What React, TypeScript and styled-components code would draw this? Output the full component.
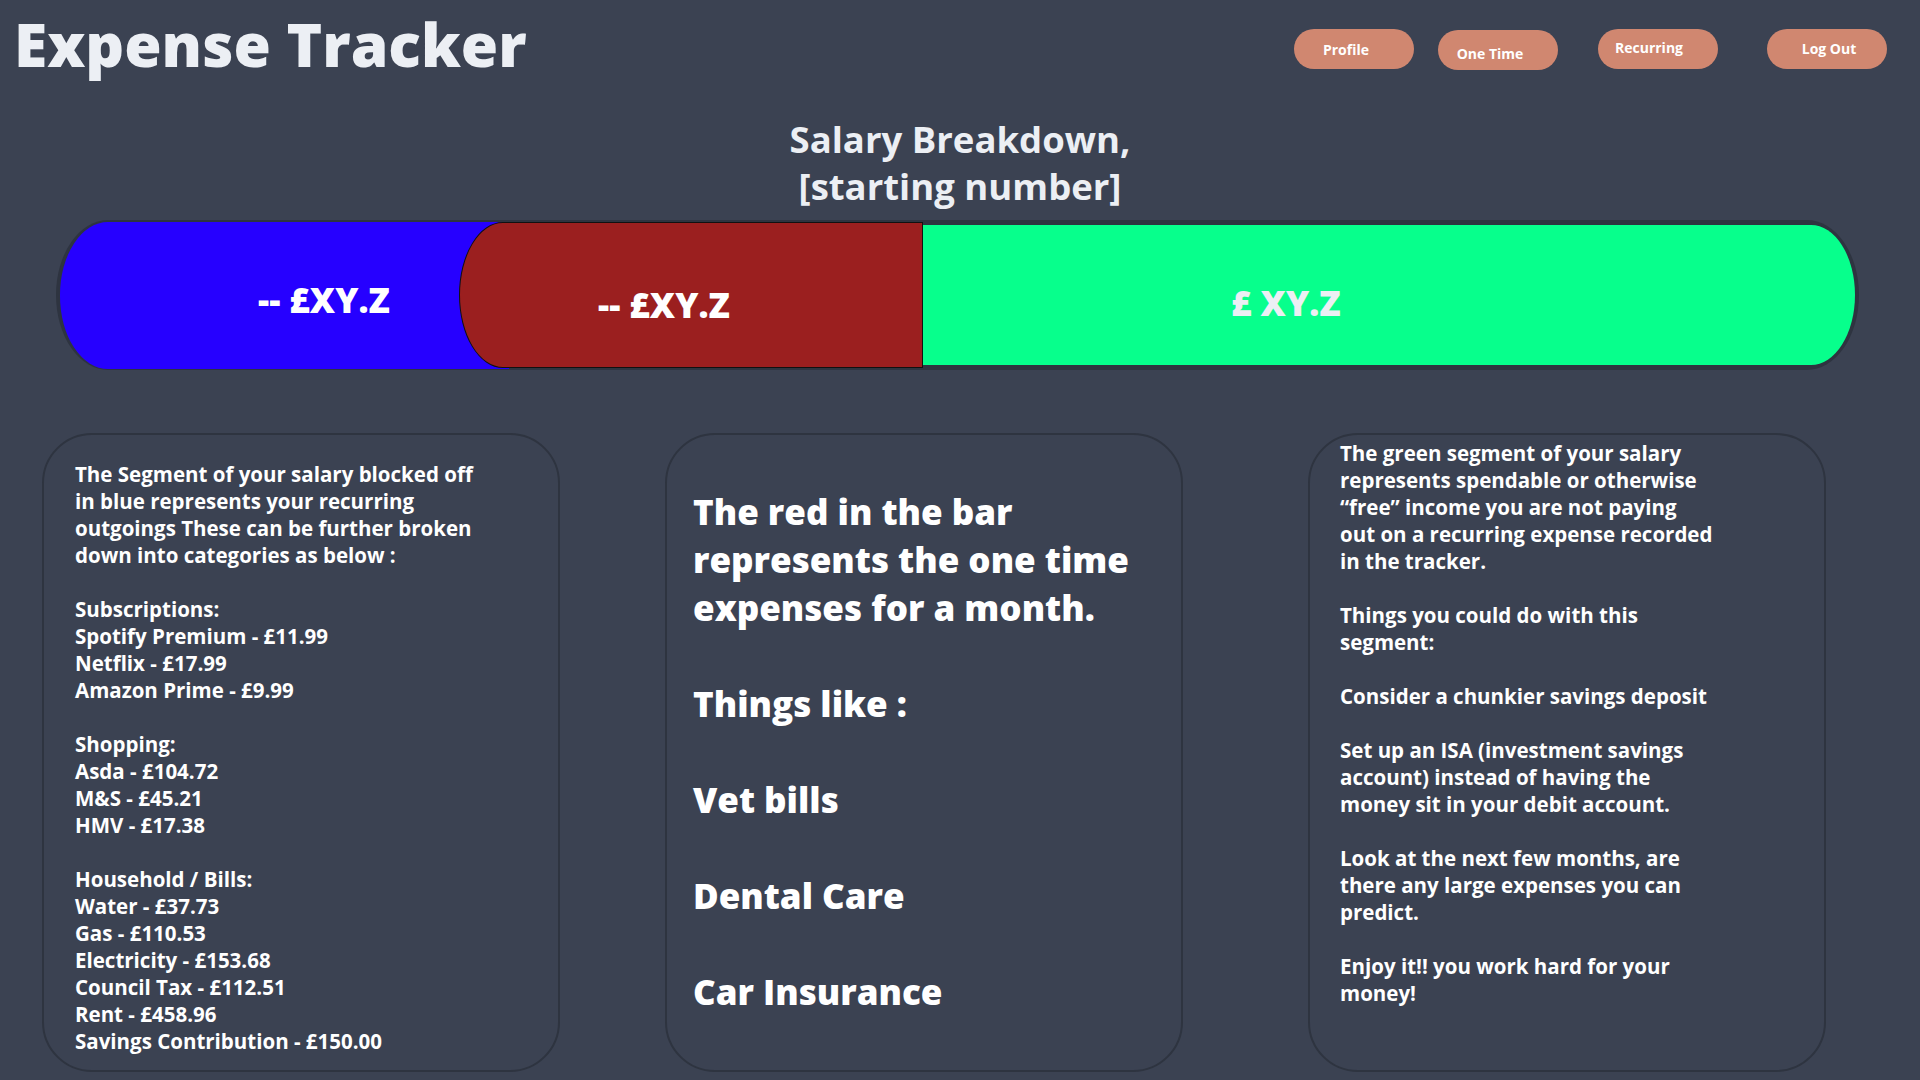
import React from "react";
import styled, { createGlobalStyle } from "styled-components";

const GlobalStyle = createGlobalStyle`
  html, body {
    margin: 0;
    padding: 0;
    background: #3b4252;
  }
  body {
    font-family: "Open Sans", "Noto Sans", sans-serif;
    color: #eceff4;
  }
  * { box-sizing: border-box; }
`;

const Page = styled.div`
  width: 1920px;
  height: 1080px;
  overflow: hidden;
  display: flex;
  flex-direction: column;
  background: #3b4252;
`;

const Header = styled.header`
  display: flex;
  justify-content: space-between;
  align-items: flex-start;
  height: 87px;
  padding: 0 33px 0 14px;
`;

const Title = styled.h1`
  margin: 0;
  font-size: 60.5px;
  font-weight: 800;
  line-height: 87px;
  color: #eceff4;
  white-space: nowrap;
`;

const Nav = styled.nav`
  display: flex;
  align-items: flex-start;
  padding-top: 29px;
`;

const NavButton = styled.button<{ $gap: number; $top: number; $dx: number; $dy: number }>`
  width: 120px;
  height: 40px;
  margin-left: ${(p) => p.$gap}px;
  margin-top: ${(p) => p.$top}px;
  border: none;
  border-radius: 20px;
  background: #d08770;
  color: #ffffff;
  font-family: "Open Sans", "Noto Sans", sans-serif;
  font-weight: 700;
  font-size: 14px;
  display: flex;
  align-items: center;
  justify-content: center;
  padding-left: ${(p) => (p.$dx > 0 ? p.$dx * 2 : 0)}px;
  padding-right: ${(p) => (p.$dx < 0 ? -p.$dx * 2 : 0)}px;
  padding-top: ${(p) => (p.$dy > 0 ? p.$dy * 2 : 0)}px;
  padding-bottom: ${(p) => (p.$dy < 0 ? -p.$dy * 2 : 0)}px;
  cursor: pointer;
`;

const Heading = styled.h2`
  margin: 29px 0 10px;
  text-align: center;
  font-size: 36.5px;
  font-weight: 700;
  line-height: 47px;
  color: #eceff4;
`;

const BarTrack = styled.div`
  margin: 0 61px 0 56px;
  height: 150px;
  display: flex;
  align-items: center;
  padding: 0 4px;
  background: #2e3440;
  border-radius: 52px / 75px;
`;

const Segment = styled.div<{
  $bg: string;
  $h: number;
  $pl: number;
  $pt: number;
  $radius: string;
  $color: string;
}>`
  height: ${(p) => p.$h}px;
  background: ${(p) => p.$bg};
  border-radius: ${(p) => p.$radius};
  display: flex;
  align-items: center;
  padding-left: ${(p) => p.$pl}px;
  padding-top: ${(p) => p.$pt}px;
  color: ${(p) => p.$color};
  font-size: 35px;
  font-weight: 800;
  white-space: nowrap;
`;

const BlueSegment = styled(Segment)`
  width: 449px;
  margin-right: -50px;
  flex-shrink: 0;
`;

const RedSegment = styled(Segment)`
  width: 464px;
  flex-shrink: 0;
  border: 1px solid #111111;
`;

const GreenSegment = styled(Segment)`
  flex: 1;
`;

const Panels = styled.div`
  display: flex;
  align-items: flex-start;
  margin-top: 63px;
  padding-left: 42px;
`;

const Panel = styled.section<{ $ml: number; $pt: number; $pl: number }>`
  width: 518px;
  height: 639px;
  margin-left: ${(p) => p.$ml}px;
  border: 2px solid #2e3440;
  border-radius: 50px;
  padding-top: ${(p) => p.$pt}px;
  padding-left: ${(p) => p.$pl}px;
  display: flex;
  flex-direction: column;
`;

const Lines = styled.div<{ $size: number; $lh: number; $weight: number }>`
  font-size: ${(p) => p.$size}px;
  line-height: ${(p) => p.$lh}px;
  font-weight: ${(p) => p.$weight};
  color: #ffffff;
  white-space: nowrap;
`;

const Line = styled.div`
  min-height: 1lh;
`;

const leftLines = [
  "The Segment of your salary blocked off",
  "in blue represents your recurring",
  "outgoings These can be further broken",
  "down into categories as below :",
  "",
  "Subscriptions:",
  "Spotify Premium - £11.99",
  "Netflix - £17.99",
  "Amazon Prime - £9.99",
  "",
  "Shopping:",
  "Asda - £104.72",
  "M&S - £45.21",
  "HMV - £17.38",
  "",
  "Household / Bills:",
  "Water - £37.73",
  "Gas - £110.53",
  "Electricity - £153.68",
  "Council Tax - £112.51",
  "Rent - £458.96",
  "Savings Contribution - £150.00",
];

const middleLines = [
  "The red in the bar",
  "represents the one time",
  "expenses for a month.",
  "",
  "Things like :",
  "",
  "Vet bills",
  "",
  "Dental Care",
  "",
  "Car Insurance",
];

const rightLines = [
  "The green segment of your salary",
  "represents spendable or otherwise",
  "\u201Cfree\u201D income you are not paying",
  "out on a recurring expense recorded",
  "in the tracker.",
  "",
  "Things you could do with this",
  "segment:",
  "",
  "Consider a chunkier savings deposit",
  "",
  "Set up an ISA (investment savings",
  "account) instead of having the",
  "money sit in your debit account.",
  "",
  "Look at the next few months, are",
  "there any large expenses you can",
  "predict.",
  "",
  "Enjoy it!! you work hard for your",
  "money!",
];

const navItems = [
  { label: "Profile", gap: 0, top: 0, dx: -8, dy: 0 },
  { label: "One Time", gap: 24, top: 1, dx: -8, dy: 3 },
  { label: "Recurring", gap: 40, top: 0, dx: -9, dy: -2 },
  { label: "Log Out", gap: 49, top: 0, dx: 2, dy: -1 },
];

export default function App() {
  return (
    <Page>
      <GlobalStyle />
      <Header>
        <Title>Expense Tracker</Title>
        <Nav>
          {navItems.map((n) => (
            <NavButton key={n.label} $gap={n.gap} $top={n.top} $dx={n.dx} $dy={n.dy}>
              {n.label}
            </NavButton>
          ))}
        </Nav>
      </Header>

      <Heading>
        Salary Breakdown,
        <br />
        [starting number]
      </Heading>

      <BarTrack>
        <BlueSegment
          $bg="#2600ff"
          $h={147}
          $pl={198}
          $pt={8}
          $radius="48px 0 0 48px / 73px 0 0 73px"
          $color="#ffffff"
        >
          -- £XY.Z
        </BlueSegment>
        <RedSegment
          $bg="#9b1f1f"
          $h={146}
          $pl={138}
          $pt={18}
          $radius="44px 0 0 44px / 73px 0 0 73px"
          $color="#ffffff"
        >
          -- £XY.Z
        </RedSegment>
        <GreenSegment
          $bg="#07ff8c"
          $h={140}
          $pl={308}
          $pt={14}
          $radius="0 44px 44px 0 / 0 70px 70px 0"
          $color="#eceff4"
        >
          £ XY.Z
        </GreenSegment>
      </BarTrack>

      <Panels>
        <Panel $ml={0} $pt={26} $pl={31}>
          <Lines $size={20.5} $lh={27} $weight={700}>
            {leftLines.map((l, i) => (
              <Line key={i}>{l}</Line>
            ))}
          </Lines>
        </Panel>
        <Panel $ml={105} $pt={53} $pl={26}>
          <Lines $size={35} $lh={48} $weight={800}>
            {middleLines.map((l, i) => (
              <Line key={i}>{l}</Line>
            ))}
          </Lines>
        </Panel>
        <Panel $ml={125} $pt={5} $pl={30}>
          <Lines $size={20.5} $lh={27} $weight={700}>
            {rightLines.map((l, i) => (
              <Line key={i}>{l}</Line>
            ))}
          </Lines>
        </Panel>
      </Panels>
    </Page>
  );
}
